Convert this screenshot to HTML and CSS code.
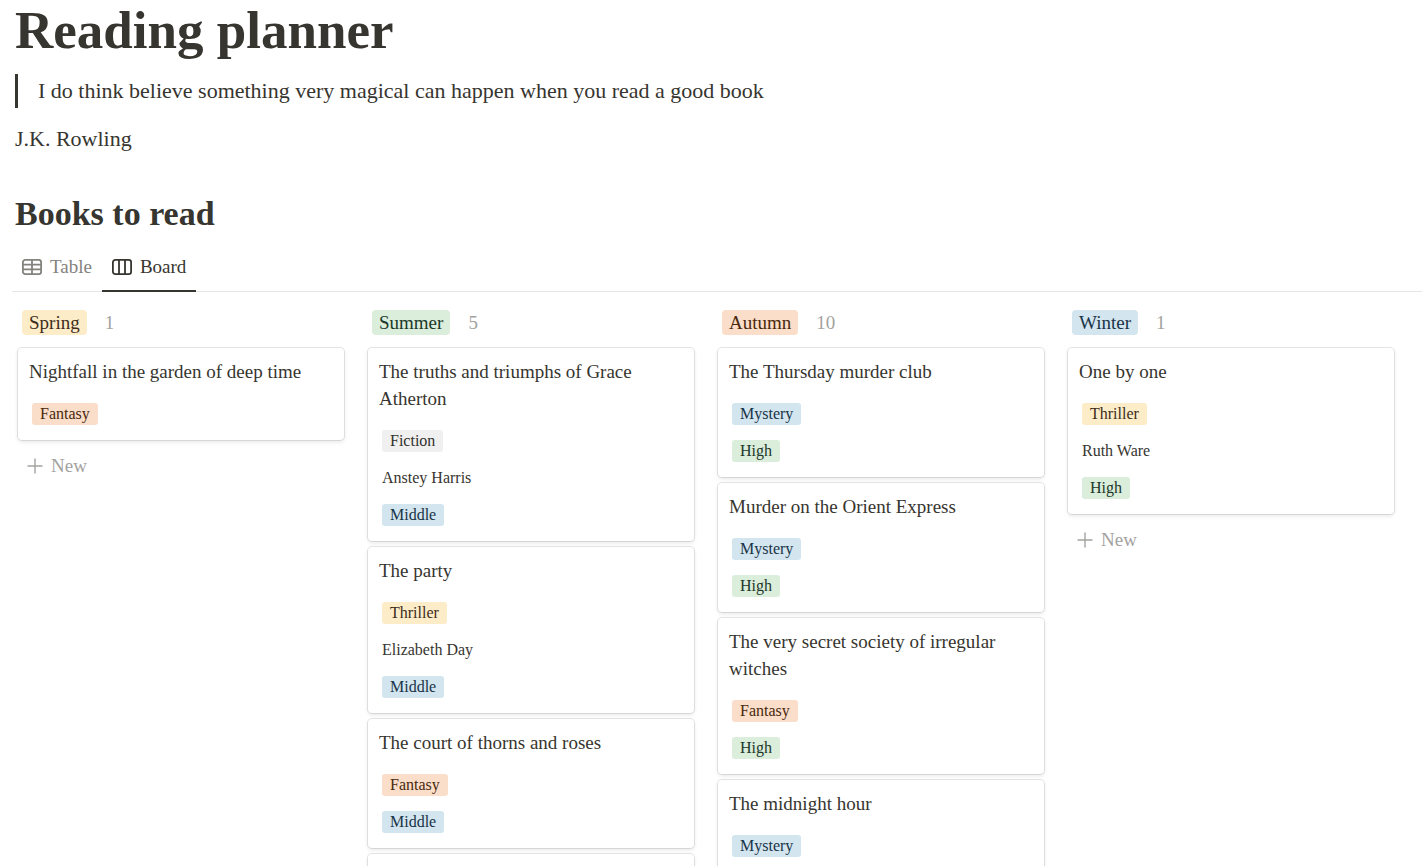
FILE: index.html
```html
<!DOCTYPE html>
<html lang="en">
<head>
    <meta charset="UTF-8">
    <meta name="viewport" content="width=device-width, initial-scale=1.0">
    <title>Reading planner</title>
    <link rel="stylesheet" href="styles.css">
</head>
<body>
    <main class="page">
        <header class="intro">
            <h1>Reading planner</h1>
            <blockquote>I do think believe something very magical can happen when you read a good book</blockquote>
            <p class="author">J.K. Rowling</p>
            <h2>Books to read</h2>
        </header>

        <nav class="tabs">
            <button type="button" class="tab">
                <svg class="tab-icon" viewBox="0 0 20 16" fill="none" stroke="currentColor" stroke-width="1.8">
                    <rect x="0.9" y="0.9" width="18.2" height="14.2" rx="2.4"/>
                    <path d="M1 5.6h18M1 10.4h18M10 1v14"/>
                </svg>
                Table
            </button>
            <button type="button" class="tab active">
                <svg class="tab-icon" viewBox="0 0 20 16" fill="none" stroke="currentColor" stroke-width="1.8">
                    <rect x="0.9" y="0.9" width="18.2" height="14.2" rx="2.4"/>
                    <path d="M7 1v14M13 1v14"/>
                </svg>
                Board
            </button>
        </nav>

        <div class="board">
            <section class="column">
                <div class="column-header">
                    <span class="season yellow">Spring</span>
                    <span class="count">1</span>
                </div>
                <article class="card">
                    <h3>Nightfall in the garden of deep time</h3>
                    <div class="row"><span class="tag orange">Fantasy</span></div>
                </article>
                <button type="button" class="new-btn">
                    <svg class="plus" viewBox="0 0 16 16" stroke="currentColor" stroke-width="1.4"><path d="M8 0.5v15M0.5 8h15"/></svg>
                    New
                </button>
            </section>

            <section class="column">
                <div class="column-header">
                    <span class="season green">Summer</span>
                    <span class="count">5</span>
                </div>
                <article class="card">
                    <h3>The truths and triumphs of Grace Atherton</h3>
                    <div class="row"><span class="tag gray">Fiction</span></div>
                    <div class="row">Anstey Harris</div>
                    <div class="row"><span class="tag blue">Middle</span></div>
                </article>
                <article class="card">
                    <h3>The party</h3>
                    <div class="row"><span class="tag yellow">Thriller</span></div>
                    <div class="row">Elizabeth Day</div>
                    <div class="row"><span class="tag blue">Middle</span></div>
                </article>
                <article class="card">
                    <h3>The court of thorns and roses</h3>
                    <div class="row"><span class="tag orange">Fantasy</span></div>
                    <div class="row"><span class="tag blue">Middle</span></div>
                </article>
                <article class="card"></article>
            </section>

            <section class="column">
                <div class="column-header">
                    <span class="season orange">Autumn</span>
                    <span class="count">10</span>
                </div>
                <article class="card">
                    <h3>The Thursday murder club</h3>
                    <div class="row"><span class="tag blue">Mystery</span></div>
                    <div class="row"><span class="tag green">High</span></div>
                </article>
                <article class="card">
                    <h3>Murder on the Orient Express</h3>
                    <div class="row"><span class="tag blue">Mystery</span></div>
                    <div class="row"><span class="tag green">High</span></div>
                </article>
                <article class="card">
                    <h3>The very secret society of irregular witches</h3>
                    <div class="row"><span class="tag orange">Fantasy</span></div>
                    <div class="row"><span class="tag green">High</span></div>
                </article>
                <article class="card">
                    <h3>The midnight hour</h3>
                    <div class="row"><span class="tag blue">Mystery</span></div>
                </article>
            </section>

            <section class="column">
                <div class="column-header">
                    <span class="season blue">Winter</span>
                    <span class="count">1</span>
                </div>
                <article class="card">
                    <h3>One by one</h3>
                    <div class="row"><span class="tag yellow">Thriller</span></div>
                    <div class="row">Ruth Ware</div>
                    <div class="row"><span class="tag green">High</span></div>
                </article>
                <button type="button" class="new-btn">
                    <svg class="plus" viewBox="0 0 16 16" stroke="currentColor" stroke-width="1.4"><path d="M8 0.5v15M0.5 8h15"/></svg>
                    New
                </button>
            </section>
        </div>
    </main>
</body>
</html>
```

FILE: styles.css
```css
/* General Styles */
* {
    box-sizing: border-box;
}

body {
    margin: 0;
    font-family: "Liberation Serif", "Times New Roman", serif;
    font-size: 19px;
    color: #37352f;
    background: #ffffff;
}

button {
    padding: 0;
    border: none;
    background: none;
    font: inherit;
    cursor: pointer;
}

h1, h2, h3, p, blockquote {
    margin: 0;
}

.page {
    height: 100vh;
    padding-left: 12px;
    overflow: hidden;
}

/* Title and quote */
.intro {
    padding-left: 3px;
}

h1 {
    font-size: 53px;
    line-height: 60px;
    margin-bottom: 14px;
}

blockquote {
    padding-left: 20px;
    border-left: 3px solid #37352f;
    font-size: 22px;
    line-height: 34px;
}

.author {
    margin-top: 14px;
    font-size: 22px;
    line-height: 34px;
}

h2 {
    margin-top: 36px;
    font-size: 34px;
    line-height: 44px;
}

/* View tabs */
.tabs {
    display: flex;
    height: 56px;
    border-bottom: 1px solid #e6e6e4;
}

.tab {
    display: flex;
    align-items: center;
    gap: 8px;
    height: 56px;
    padding: 8px 10px 0;
    border-bottom: 2px solid transparent;
    color: #84827d;
}

.tab.active {
    color: #37352f;
    border-bottom-color: #37352f;
}

.tab-icon {
    width: 20px;
    height: 16px;
}

/* Board */
.board {
    display: grid;
    grid-template-columns: repeat(4, 1fr);
    gap: 24px;
    padding: 18px 28px 0 6px;
}

.column {
    display: flex;
    flex-direction: column;
    gap: 6px;
}

.column-header {
    display: flex;
    align-items: center;
    gap: 18px;
    height: 32px;
    padding: 0 0 7px 4px;
}

.season {
    padding: 0 7px;
    border-radius: 4px;
    line-height: 25px;
}

.count {
    color: #a3a29f;
}

.card {
    min-height: 92px;
    padding: 10px 11px 8px;
    border-radius: 4px;
    background: #ffffff;
    box-shadow: 0 0 0 1px rgba(15, 15, 15, 0.1), 0 2px 4px rgba(15, 15, 15, 0.1);
}

.card h3 {
    margin-bottom: 10px;
    font-size: 19px;
    font-weight: normal;
    line-height: 27px;
}

.row {
    display: flex;
    align-items: center;
    height: 37px;
    padding-left: 3px;
    font-size: 16px;
}

.tag {
    padding: 0 8px;
    border-radius: 3px;
    line-height: 22px;
}

.yellow {
    background: #fdecc8;
    color: #402c1b;
}

.orange {
    background: #fadec9;
    color: #49290e;
}

.green {
    background: #dbeddb;
    color: #1c3829;
}

.blue {
    background: #d3e5ef;
    color: #183347;
}

.gray {
    background: #f1f0f0;
    color: #32302c;
}

.new-btn {
    display: flex;
    align-items: center;
    gap: 8px;
    height: 40px;
    padding-left: 9px;
    color: #a3a29f;
}

.plus {
    width: 16px;
    height: 16px;
}
```
